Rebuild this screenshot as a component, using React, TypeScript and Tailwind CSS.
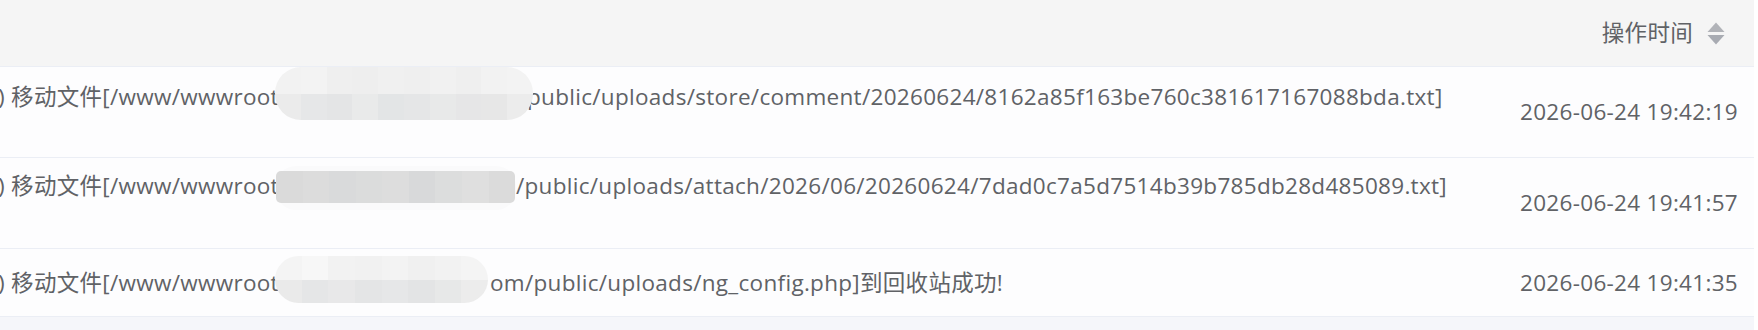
import React from "react";

type Row = {
  prefixWidth: number;
  suffix: string;
  time: string;
  height: string;
  pad: string;
  top: boolean;
  blur: React.ReactNode;
};

function PillBlur({
  top,
  height,
  width,
  topColors,
  bottomColors,
}: {
  top: number;
  height: number;
  width: number;
  topColors: string[];
  bottomColors: string[];
}) {
  return (
    <div
      className="absolute left-[275px] overflow-hidden rounded-[26px] flex flex-col blur-[0.6px]"
      style={{ top, height, width }}
    >
      <div className="flex flex-1">
        {topColors.map((c, i) => (
          <div key={i} className="flex-1" style={{ background: c }} />
        ))}
      </div>
      <div className="flex flex-1">
        {bottomColors.map((c, i) => (
          <div key={i} className="flex-1" style={{ background: c }} />
        ))}
      </div>
    </div>
  );
}

function RectBlur() {
  const cols = ["#dadada", "#dcdcdc", "#d9dadb", "#dbdcdc", "#dddddd", "#d8d9da", "#dcdddd", "#dfdfdf", "#dbdbdb"];
  return (
    <div className="absolute left-[276px] top-[8px] w-[240px] h-[44px] rounded-[20px] bg-[#fafafb]">
      <div className="absolute left-[0px] top-[5px] w-[239px] h-[32px] rounded-[5px] overflow-hidden flex blur-[0.5px]">
        {cols.map((c, i) => (
          <div key={i} className="flex-1" style={{ background: c }} />
        ))}
      </div>
    </div>
  );
}

function SortIcon() {
  return (
    <svg width="18" height="23" viewBox="0 0 18 23" className="shrink-0">
      <path d="M9 0.5 L17.5 10 L0.5 10 Z" fill="#b1b3b8" />
      <path d="M0.5 13 L17.5 13 L9 22.5 Z" fill="#a8abb2" />
    </svg>
  );
}

export default function App() {
  const rows: Row[] = [
    {
      prefixWidth: 527,
      suffix: "public/uploads/store/comment/20260624/8162a85f163be760c381617167088bda.txt]",
      time: "2026-06-24 19:42:19",
      height: "h-[91px]",
      pad: "pt-[16px]",
      top: true,
      blur: (
        <PillBlur
          top={0}
          height={53}
          width={258}
          topColors={["#f2f2f2", "#f3f3f3", "#efefef", "#eeeeee", "#f0f0f0", "#efefef", "#f1f1f1", "#efefef", "#f2f2f2", "#f3f3f3"]}
          bottomColors={["#ebebeb", "#e6e7e8", "#e4e5e6", "#e9eaea", "#e3e5e6", "#e5e6e7", "#e8e9e9", "#e6e6e7", "#e7e7e7", "#ececec"]}
        />
      ),
    },
    {
      prefixWidth: 516,
      suffix: "/public/uploads/attach/2026/06/20260624/7dad0c7a5d7514b39b785db28d485089.txt]",
      time: "2026-06-24 19:41:57",
      height: "h-[91px]",
      pad: "pt-[14px]",
      top: true,
      blur: <RectBlur />,
    },
    {
      prefixWidth: 490,
      suffix: "om/public/uploads/ng_config.php]到回收站成功!",
      time: "2026-06-24 19:41:35",
      height: "h-[68px]",
      pad: "",
      top: false,
      blur: (
        <PillBlur
          top={7}
          height={47}
          width={213}
          topColors={["#f4f4f4", "#f7f7f7", "#f2f2f2", "#f1f1f1", "#f3f3f3", "#f0f0f0", "#f2f2f2", "#f4f4f4"]}
          bottomColors={["#eaeaea", "#e5e6e7", "#e8e8e9", "#e4e5e6", "#e6e7e8", "#e3e4e5", "#e7e8e8", "#ececec"]}
        />
      ),
    },
  ];

  return (
    <div
      className="w-[1758px] h-[330px] bg-white overflow-hidden text-[22.5px] text-[#606266] tracking-[0.3px]"
      style={{ fontFamily: "'Open Sans', 'Noto Sans CJK SC', sans-serif" }}
    >
      <div className="w-[1754px] h-full bg-[#f5f6fa] flex flex-col">
        <div className="h-[67px] shrink-0 bg-[#f5f5f5] border-b border-[#ebeef5] flex items-center justify-end pr-[29px]">
          <span className="leading-[28px]">操作时间</span>
          <span className="ml-[14px] flex items-center">
            <SortIcon />
          </span>
        </div>
        {rows.map((r, i) => (
          <div
            key={i}
            className={`${r.height} shrink-0 bg-[#fdfdfe] border-b border-[#ebeef5] flex items-center`}
          >
            <div className={`relative flex-1 h-full flex ${r.top ? "items-start" : "items-center"} ${r.pad} overflow-hidden whitespace-nowrap`}>
              <div className="flex items-center leading-[28px] ml-[-2px]">
                <span className="inline-block shrink-0" style={{ width: r.prefixWidth + 2 }}>
                  ) 移动文件[/www/wwwroot
                </span>
                <span>{r.suffix}</span>
              </div>
              {r.blur}
            </div>
            <div className="w-[260px] shrink-0 flex justify-end pr-[16px] leading-[28px]">
              {r.time}
            </div>
          </div>
        ))}
        <div className="flex-1 bg-[#f5f6fa]" />
      </div>
    </div>
  );
}
